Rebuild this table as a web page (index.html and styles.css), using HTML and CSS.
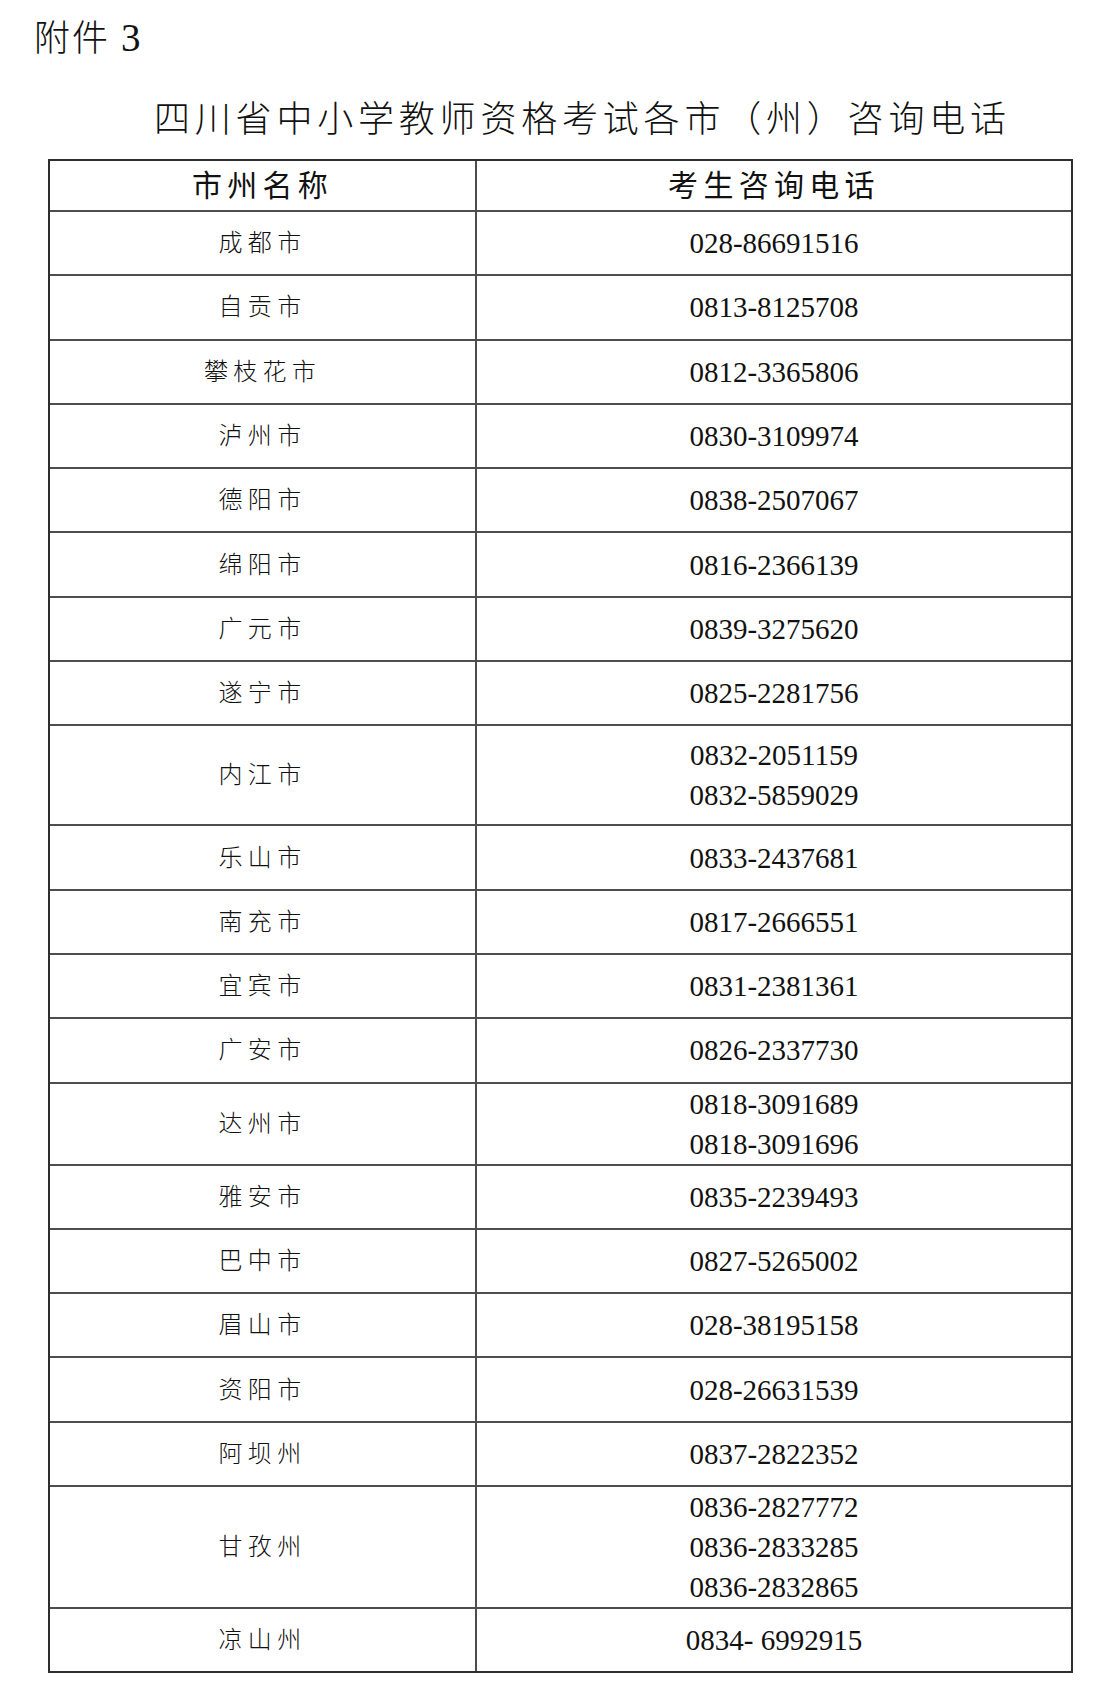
FILE: index.html
```html
<!DOCTYPE html>
<html lang="zh-CN">
<head>
<meta charset="utf-8">
<title>四川省中小学教师资格考试各市（州）咨询电话</title>
<link rel="stylesheet" href="styles.css">
</head>
<body>
<div class="page">
  <div class="annex">附件 <span class="num">3</span></div>
  <h1 class="title">四川省中小学教师资格考试各市（州）咨询电话</h1>
  <div class="tbl">
    <div class="row head"><div class="c1"><span class="hd">市州名称</span></div><div class="c2"><span class="hd">考生咨询电话</span></div></div>
    <div class="row"><div class="c1"><span class="city">成都市</span></div><div class="c2"><span class="tel">028-86691516</span></div></div>
    <div class="row"><div class="c1"><span class="city">自贡市</span></div><div class="c2"><span class="tel">0813-8125708</span></div></div>
    <div class="row"><div class="c1"><span class="city">攀枝花市</span></div><div class="c2"><span class="tel">0812-3365806</span></div></div>
    <div class="row"><div class="c1"><span class="city">泸州市</span></div><div class="c2"><span class="tel">0830-3109974</span></div></div>
    <div class="row"><div class="c1"><span class="city">德阳市</span></div><div class="c2"><span class="tel">0838-2507067</span></div></div>
    <div class="row"><div class="c1"><span class="city">绵阳市</span></div><div class="c2"><span class="tel">0816-2366139</span></div></div>
    <div class="row"><div class="c1"><span class="city">广元市</span></div><div class="c2"><span class="tel">0839-3275620</span></div></div>
    <div class="row"><div class="c1"><span class="city">遂宁市</span></div><div class="c2"><span class="tel">0825-2281756</span></div></div>
    <div class="row two"><div class="c1"><span class="city">内江市</span></div><div class="c2"><span class="tel">0832-2051159</span><span class="tel">0832-5859029</span></div></div>
    <div class="row"><div class="c1"><span class="city">乐山市</span></div><div class="c2"><span class="tel">0833-2437681</span></div></div>
    <div class="row"><div class="c1"><span class="city">南充市</span></div><div class="c2"><span class="tel">0817-2666551</span></div></div>
    <div class="row"><div class="c1"><span class="city">宜宾市</span></div><div class="c2"><span class="tel">0831-2381361</span></div></div>
    <div class="row"><div class="c1"><span class="city">广安市</span></div><div class="c2"><span class="tel">0826-2337730</span></div></div>
    <div class="row two-tight"><div class="c1"><span class="city">达州市</span></div><div class="c2"><span class="tel">0818-3091689</span><span class="tel">0818-3091696</span></div></div>
    <div class="row"><div class="c1"><span class="city">雅安市</span></div><div class="c2"><span class="tel">0835-2239493</span></div></div>
    <div class="row"><div class="c1"><span class="city">巴中市</span></div><div class="c2"><span class="tel">0827-5265002</span></div></div>
    <div class="row"><div class="c1"><span class="city">眉山市</span></div><div class="c2"><span class="tel">028-38195158</span></div></div>
    <div class="row"><div class="c1"><span class="city">资阳市</span></div><div class="c2"><span class="tel">028-26631539</span></div></div>
    <div class="row"><div class="c1"><span class="city">阿坝州</span></div><div class="c2"><span class="tel">0837-2822352</span></div></div>
    <div class="row three"><div class="c1"><span class="city">甘孜州</span></div><div class="c2"><span class="tel">0836-2827772</span><span class="tel">0836-2833285</span><span class="tel">0836-2832865</span></div></div>
    <div class="row"><div class="c1"><span class="city">凉山州</span></div><div class="c2"><span class="tel">0834- 6992915</span></div></div>
  </div>
</div>
</body>
</html>
```

FILE: styles.css
```css
html, body {
  margin: 0;
  padding: 0;
  background: #ffffff;
}

body {
  font-family: "Liberation Serif", "Noto Sans CJK SC", serif;
  color: #111111;
}

.page {
  width: 1100px;
  height: 1691px;
  box-sizing: border-box;
  padding-top: 17px;
}

.annex {
  height: 44px;
  padding-left: 34px;
  font-size: 36px;
  line-height: 44px;
  letter-spacing: 2px;
  font-weight: 300;
}

.annex .num {
  font-size: 39px;
  line-height: 1;
  font-weight: 400;
}

.title {
  margin: 34px 0 0 0;
  padding-left: 154px;
  font-size: 36px;
  line-height: 50px;
  font-weight: 300;
  letter-spacing: 4.8px;
  white-space: nowrap;
}

.tbl {
  margin: 14px 0 0 48px;
  width: 1025px;
  box-sizing: border-box;
  border: 2px solid #2e2e2e;
}

.row {
  display: grid;
  grid-template-columns: 427px 1fr;
  height: 64.3px;
  box-sizing: border-box;
  border-top: 2px solid #4d4d4d;
}

.row.head {
  height: 49px;
  border-top: none;
}

.row.two {
  height: 100px;
}

.row.two-tight {
  height: 82px;
}

.row.three {
  height: 122px;
}

.c1, .c2 {
  display: flex;
  flex-direction: column;
  align-items: center;
  justify-content: center;
}

.c1 {
  box-sizing: border-box;
  border-right: 2px solid #4d4d4d;
}

.hd {
  font-size: 30px;
  line-height: 40px;
  letter-spacing: 5.3px;
  font-weight: 400;
}

.city {
  font-size: 24px;
  line-height: 32px;
  letter-spacing: 5.3px;
  font-weight: 300;
}

.tel {
  font-size: 29px;
  line-height: 40px;
  white-space: pre;
}
```
